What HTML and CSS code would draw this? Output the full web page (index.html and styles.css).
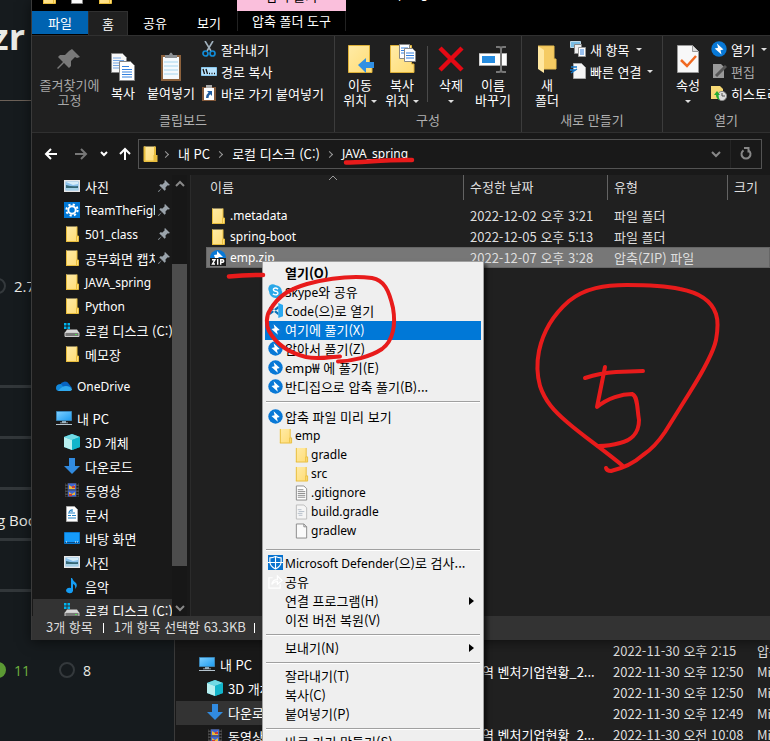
FILE: index.html
```html
<!DOCTYPE html>
<html lang="ko">
<head>
<meta charset="utf-8">
<title>JAVA_spring</title>
<link rel="stylesheet" href="styles.css">
</head>
<body>
<svg class="defs" aria-hidden="true">
  <defs>
    <linearGradient id="gold" x1="0" y1="0" x2="1" y2="1"><stop offset="0" stop-color="#ffeba6"/><stop offset="1" stop-color="#ffdc75"/></linearGradient>
    <linearGradient id="screen" x1="0" y1="0" x2="1" y2="1"><stop offset="0" stop-color="#7fd0ff"/><stop offset="1" stop-color="#1c9bf0"/></linearGradient>
  </defs>
  <symbol id="folder" viewBox="0 0 16 16"><path d="M2 .5h11V10h1.5v5.500H2z" fill="url(#gold)"/><path d="M2.500 .5v15M2 15.500h12.500V10h-2v5M13 .5V10" fill="none" stroke="#e8bd3d"/></symbol>
  <symbol id="openfolder" viewBox="0 0 28 30"><path d="M5 2h16v13h2v10H5z" fill="#f5cb63"/><path d="M5 2l6 4v23l-6-4z" fill="#ffe7a0"/><path d="M11 25h12V15h-2V2H5" fill="none" stroke="#e8bd50"/></symbol>
  <symbol id="picture" viewBox="0 0 16 16"><path d="M.7 2.700h14.600v10.600H.7z" fill="#8bc2ec" stroke="#e8e8e8" stroke-width="1.400"/><path d="M2 7q6 2 12 1v4H2z" fill="#346776"/><path d="M2 10h12v2H2z" fill="#a3cfe5"/><path d="M2 4h12v2l-5 1z" fill="#d5edfa"/></symbol>
  <symbol id="gear" viewBox="0 0 16 16"><path d="M0 0h16v16H0z" fill="#0078d7"/><circle cx="8" cy="8" r="3.700" fill="none" stroke="#fff" stroke-width="2"/><circle cx="8" cy="8" r="5.600" fill="none" stroke="#fff" stroke-width="2" stroke-dasharray="2.200 2.198"/></symbol>
  <symbol id="drive" viewBox="0 0 16 16"><path d="M0 1h2.500v2.500H0zM3.500 1H6v2.500H3.500zM0 4.500h2.500V7H0zM3.500 4.500H6V7H3.500z" fill="#00b5f1"/><path d="M3 7.500h10l2 3H1z" fill="#d7d7d7"/><path d="M1 10.500h14v4H1z" fill="#777" stroke="#ccc"/><path d="M11 12h2v1h-2z" fill="#4de04d"/></symbol>
  <symbol id="cloud" viewBox="0 0 16 16"><path d="M4 7a5 5 0 0 1 9-1l3 4-9 2z" fill="#0763c0"/><path d="M0 10q0-4 5-4l6 7H3q-3 0-3-3z" fill="#1389dc"/><path d="M2 13q4-5 8-5t6 3q0 2-3 2z" fill="#30a9ee"/></symbol>
  <symbol id="pc" viewBox="0 0 16 16"><path d="M.5 1.500h15v9H.5z" fill="url(#screen)" stroke="#3a84b5"/><path d="M6 11h4v2H6z" fill="#8aa4b3"/><path d="M0 14h16v1H0zM4 12.500h8v.8H4z" fill="#b5c4ce"/></symbol>
  <symbol id="cube" viewBox="0 0 16 16"><path d="M8 0l8 3v10l-8 3-8-3V3z" fill="#18a9c4"/><path d="M8 0l8 3-8 3-8-3z" fill="#72dae5"/><path d="M0 3l8 3v10l-8-3z" fill="#b8eff0"/><path d="M8 6l8-3v10l-8 3z" fill="#12b5cb"/></symbol>
  <symbol id="down" viewBox="0 0 16 16"><path d="M5 0h6v8h5l-8 8-8-8h5z" fill="#318be0"/></symbol>
  <symbol id="film" viewBox="0 0 16 16"><path d="M1 1h14v14H1z" fill="#4b4b4b"/><path d="M2.500 1v14M13.500 1v14" stroke="#151515" stroke-width="2" stroke-dasharray="1.500 1.500"/><path d="M4 1.500h8v6H4zM4 8.500h8v6H4z" fill="#3f65d2"/><path d="M5 3l3 2 3-2v4H5zM5 10l3 2 3-2v3H5z" fill="#ebb73a"/><path d="M8 4h3v2H8zM5 12h3v2H5z" fill="#cb3d34"/></symbol>
  <symbol id="doc" viewBox="0 0 16 16"><path d="M2.500.5h8l3 3v12h-11z" fill="#fff" stroke="#aaa"/><path d="M4 7h7M4 9.500h3m1 0h4M4 12h8M7 4l-2 2m3-3v3" stroke="#2584c8" stroke-width="1.200"/></symbol>
  <symbol id="desktop" viewBox="0 0 16 16"><path d="M.5 2.500h15v11H.5z" fill="#169bfa" stroke="#0879d0"/><path d="M1 12h14v1H1z" fill="#064d8d"/><path d="M2 12h1M11 12h1M13 12h1" stroke="#fff"/></symbol>
  <symbol id="note" viewBox="0 0 16 16"><path d="M8 0q1 3 4 5 2 3-1 6 1-4-2-5v7a3.500 2.700 0 1 1-2-3V0z" fill="#149df5"/></symbol>
  <symbol id="pin" viewBox="0 0 12 12"><path d="M7 0l5 5-1.500.6-.8-.3L7.500 7.500l.2 2.300-1.200.9L4 8l-3.300 4L0 11.300 4 8 1.300 5.500l1-1.200 2.200.2L6.700 2.300 6.400 1z" fill="#9aa3ab"/></symbol>
  <symbol id="bandi" viewBox="0 0 16 16"><circle cx="8" cy="8" r="7.700" fill="#0878d6"/><path d="M6 2.500l6.500 6-3 .7 1 4.300-6.800-6 3.300-.8z" fill="#fff"/></symbol>
  <symbol id="zip" viewBox="0 0 16 16"><path d="M0 8a8 8 0 0 1 16 0z" fill="#0878d6"/><path d="M7 1l6 6H8l1 1H5L4 5l3-.5z" fill="#fff"/><path d="M0 8h16v8H0z" fill="#1d1d1d"/><path d="M2 9.700h3L2.500 14H5M7.700 9v5.700M10.700 14.700v-5H13q1.500 1.300 0 2.600h-2" fill="none" stroke="#fff" stroke-width="1.400"/></symbol>
  <symbol id="skype" viewBox="0 0 16 16"><circle cx="5" cy="5" r="4.700" fill="#2ba8e8"/><circle cx="11" cy="11" r="4.700" fill="#2ba8e8"/><circle cx="8" cy="8" r="6.800" fill="#2ba8e8"/><path d="M10.700 5.500Q8 3.500 6 5q-1 2 2 2.800 3.500.7 2.200 3Q8 12.500 5.200 10.500" fill="none" stroke="#fff" stroke-width="1.500"/></symbol>
  <symbol id="code" viewBox="0 0 16 16"><path d="M11 0l5 2v12l-5 2z" fill="#28a8f0"/><path d="M11 3L1 11l1.500 1.500L11 6zM11 13L1 5l1.500-1.500L11 10z" fill="#0873b9"/></symbol>
  <symbol id="textfile" viewBox="0 0 16 16"><path d="M2.500.5h8l3 3v12h-11z" fill="#fff" stroke="#888"/><path d="M4 4.500h6M4 6.500h8M4 8.500h8M4 10.500h8M4 12.500h8" stroke="#888"/></symbol>
  <symbol id="gradlefile" viewBox="0 0 16 16"><path d="M2.500.5h8l3 3v12h-11z" fill="#f5f5f5" stroke="#bbb"/><path d="M4 5.500h4M5 7.500h6M4 9.500h5M5 11.500h4" stroke="#b5bec9"/></symbol>
  <symbol id="blankfile" viewBox="0 0 16 16"><path d="M2.500.5h8l3 3v12h-11z" fill="#fafafa" stroke="#888"/><path d="M10.500.5v3h3" fill="none" stroke="#888"/></symbol>
  <symbol id="defender" viewBox="0 0 16 16"><path d="M0 0h16v16H0z" fill="#0873cf"/><path d="M8 1.500q3 1.500 6 1.500v4q0 5-6 8-6-3-6-8V3q3 0 6-1.500z" fill="#0873cf" stroke="#fff" stroke-width="1.200"/><path d="M8 1v14M0 8h16" stroke="#fff" stroke-width="1.200"/></symbol>
  <symbol id="share" viewBox="0 0 16 16"><path d="M5 4H1v11h12v-4M4 11q1-5 6-5V2l5 5-5 4V8Q6 8 4 11z" fill="none" stroke="#fff" stroke-width="1.300"/></symbol>
  <symbol id="copy" viewBox="0 0 28 30"><path d="M2.500 1.500h11l4 4v15h-15z" fill="#f8f8f8" stroke="#858585"/><path d="M4 6h8M4 8.500h11M4 11h11M4 13.500h11M4 16h11" stroke="#76a7e5"/><path d="M10.500 9.500h11l4 4v15h-15z" fill="#fff" stroke="#858585"/><path d="M13 14.500h7M13 17.500h10M13 20h10M13 22.500h10M13 25h10" stroke="#3481df"/></symbol>
</svg>

<div class="screen">
  <main class="site">
    <div class="brand">zr</div>
    <p class="version"><span class="radio"></span>2.7</p>
    <div class="rules"><i></i><i></i><i></i><b>g Boo</b><i></i><i></i></div>
    <p class="java"><span class="radio on"></span><em>11</em><span class="radio ring"></span>8</p>
  </main>

  <section class="window back">
    <nav class="tree" aria-label="다운로드 폴더">
      <a href="#" class="top"><svg><use href="#pc"/></svg>내 PC</a>
      <a href="#"><svg><use href="#cube"/></svg>3D 개체</a>
      <a href="#" class="selected"><svg><use href="#down"/></svg>다운로드</a>
      <a href="#"><svg><use href="#film"/></svg>동영상</a>
    </nav>
    <table class="files">
      <colgroup><col class="c-name"><col class="c-date"><col></colgroup>
      <tr><td></td><td>2022-11-30 오후 2:15</td><td>압축(ZIP) 파일</td></tr>
      <tr><td class="name">역 벤처기업현황_2...</td><td>2022-11-30 오후 12:50</td><td>Microsoft Excel</td></tr>
      <tr><td></td><td>2022-11-30 오후 12:50</td><td>Microsoft Excel</td></tr>
      <tr><td></td><td>2022-11-30 오후 12:49</td><td>Microsoft Excel</td></tr>
      <tr><td class="name">역 벤처기업현황_2...</td><td>2022-11-30 오전 10:08</td><td>Microsoft Excel</td></tr>
    </table>
  </section>

  <section class="window front">
    <header class="titlebar">
      <div class="quick"><svg><use href="#folder"/></svg><svg><use href="#blankfile"/></svg><svg><use href="#folder"/></svg></div>
      <div class="context">압축 풀기</div>
      <div class="title latin">JAVA_spring</div>
    </header>
    <div class="tabs">
      <button class="file">파일</button><button class="home">홈</button><button class="tab">공유</button><button class="tab">보기</button><button class="tools">압축 폴더 도구</button>
    </div>

    <div class="ribbon">
      <section class="group clip">
        <div class="controls">
          <button class="big w67 dim"><svg viewBox="0 0 28 30"><path d="M16 5l8 8-3 1-2-1-4 4v5l-2 2-5-5-6 6-1-1 6-6-5-5 2-2h5l4-4z" fill="#797979"/></svg>즐겨찾기에<br>고정</button>
          <button class="big w40"><svg><use href="#copy"/></svg>복사</button>
          <button class="big w56"><svg viewBox="0 0 28 30"><path d="M4 3h20v26H4z" fill="#8d623d"/><path d="M6 5h16v22H6z" fill="#f5fafe"/><path d="M7 10h14M7 14h14M7 18h14M7 22h14" stroke="#a6d5ee"/><path d="M8 6V3h4q2-5 4 0h4v3z" fill="#8c9094"/></svg>붙여넣기</button>
          <div class="small">
            <button><svg viewBox="0 0 16 16"><path d="M4 0l6 10M12 0L6 10" stroke="#a0b0bc" stroke-width="1.600"/><circle cx="4.500" cy="12.500" r="2.500" fill="none" stroke="#118bd6" stroke-width="1.700"/><circle cx="11.500" cy="12.500" r="2.500" fill="none" stroke="#118bd6" stroke-width="1.700"/></svg>잘라내기</button>
            <button><svg viewBox="0 0 16 16"><path d="M.5 4.500h15v8H.5z" fill="#b8e2fb" stroke="#89c8ed"/><path d="M2 6l1.500 5M5 6l1.500 5M8 10.500h1M10.500 10.500h1M13 10.500h1" stroke="#111" stroke-width="1.300"/></svg>경로 복사</button>
            <button><svg viewBox="0 0 16 16"><path d="M1 2h14v14H1z" fill="#855a3b"/><path d="M3 3h10v12H3z" fill="#fff"/><path d="M5 0h6v3H5z" fill="#aaa"/><path d="M6 6h5v5L9.300 9.300Q7.500 10.500 7.500 13H5q0-3.500 2.600-5.400z" fill="#235d9f"/></svg>바로 가기 붙여넣기</button>
          </div>
        </div>
        <h2>클립보드</h2>
      </section>
      <section class="group org">
        <div class="controls">
          <button class="big w42"><svg viewBox="0 0 28 30"><path d="M2.500 1.500h21V20H26v8.500H2.500z" fill="url(#gold)" stroke="#dfb23a"/><path d="M12 21l8-7v4h8v6h-8v5z" fill="#3090e4"/></svg>이동<br>위치 <i class="caret"></i></button>
          <button class="big w42"><svg viewBox="0 0 28 30"><path d="M2.500 1.500h21V20H26v8.500H2.500z" fill="url(#gold)" stroke="#dfb23a"/><path d="M11.500.5h10v14h-10z" fill="#fff" stroke="#888"/><path d="M13 4h7M13 6.500h7M13 9h7" stroke="#3481df"/><path d="M16.500 4.500h8l3 3v10h-11z" fill="#fff" stroke="#888"/><path d="M18 9h8M18 11.500h8M18 14h8" stroke="#3481df"/></svg>복사<br>위치 <i class="caret"></i></button>
          <span class="divider"></span>
          <button class="big w42"><svg viewBox="0 0 28 30"><path d="M3 4l22 22M25 4L3 26" stroke="#e50914" stroke-width="4.500"/></svg>삭제<br><i class="caret"></i></button>
          <button class="big w42"><svg viewBox="0 0 28 30"><path d="M0 9.500h28v12H0z" fill="#fff" stroke="#aaa"/><path d="M3 12h13v7H3z" fill="#268ce0"/><path d="M17 3h3q2 0 2 2 0-2 2-2h3M22 4v22M17 28h3q2 0 2-2 0 2 2 2h3" fill="none" stroke="#777" stroke-width="2"/></svg>이름<br>바꾸기</button>
        </div>
        <h2>구성</h2>
      </section>
      <section class="group create">
        <div class="controls">
          <button class="big w42"><svg><use href="#openfolder"/></svg>새<br>폴더</button>
          <div class="small">
            <button><svg viewBox="0 0 16 16"><path d="M.5.5h10v6H.5z" fill="#79bce2" stroke="#bdd8e7"/><path d="M4.500 3.500h7v9h-7z" fill="#eee" stroke="#888"/><path d="M8.500 6.500h7v9h-7z" fill="#fff" stroke="#999"/><path d="M10 9h4M10 11h4M10 13h4" stroke="#3481df"/></svg>새 항목<i class="caret"></i></button>
            <button><svg viewBox="0 0 16 16"><path d="M3.500.5h8l4 4v11h-12z" fill="#f5f5f5" stroke="#aaa"/><path d="M1 4h6M0 7h6M1 10l6-4" stroke="#1377c9" stroke-width="1.300"/></svg>빠른 연결<i class="caret"></i></button>
          </div>
        </div>
        <h2>새로 만들기</h2>
      </section>
      <section class="group open">
        <div class="controls">
          <button class="big w42"><svg viewBox="0 0 28 30"><path d="M3.500 1.500h15l6 6v21h-21z" fill="#f8f8f8" stroke="#999"/><path d="M18.500 1.500v6h6" fill="#ddd" stroke="#999"/><path d="M7 16l6 6 9-10" fill="none" stroke="#f16a22" stroke-width="2.500"/></svg>속성<br><i class="caret"></i></button>
          <div class="small">
            <button><svg><use href="#bandi"/></svg>열기<i class="caret"></i></button>
            <button class="dim"><svg viewBox="0 0 16 16"><path d="M2 1h8l3 3v11H2z" fill="#999"/><path d="M5 13L15 3" stroke="#555" stroke-width="3"/></svg>편집</button>
            <button><svg viewBox="0 0 16 16"><path d="M0 1h9l3 3v10H0z" fill="#f7d975"/><circle cx="11" cy="11" r="4.600" fill="#ddd" stroke="#888"/><path d="M11 8v3h3" fill="none" stroke="#555"/><path d="M3 10l3-4 3 4H7.500q0 3 1.500 5-4-1-4-5z" fill="#26ac33"/></svg>히스토리</button>
          </div>
        </div>
        <h2>열기</h2>
      </section>
    </div>

    <div class="location">
      <button class="arrow" aria-label="뒤로"><svg viewBox="0 0 14 14"><path d="M13 7H2m5-5L2 7l5 5"/></svg></button>
      <button class="arrow off" aria-label="앞으로"><svg viewBox="0 0 14 14"><path d="M1 7h11M7 2l5 5-5 5"/></svg></button>
      <button class="recent" aria-label="최근 위치"><svg viewBox="0 0 8 8"><path d="M1 2l3 3 3-3"/></svg></button>
      <button class="arrow" aria-label="위로"><svg viewBox="0 0 14 14"><path d="M7 13V2M2 7l5-5 5 5"/></svg></button>
      <div class="address">
        <svg class="ico"><use href="#folder"/></svg><i class="sep"></i>
        <a href="#">내 PC</a><i class="sep"></i><a href="#">로컬 디스크 (C:)</a><i class="sep"></i><a href="#" class="latin">JAVA_spring</a>
        <button class="expand" aria-label="이전 위치"><svg viewBox="0 0 10 10"><path d="M1 3l4 4 4-4"/></svg></button>
        <button class="refresh" aria-label="새로 고침"><svg viewBox="0 0 14 14"><path d="M4.500 3.300A4.500 4.500 0 1 0 9.500 3.300M5 1h4.500v4.500"/></svg></button>
      </div>
    </div>

    <div class="body">
      <nav class="tree" aria-label="탐색 창">
        <a href="#"><svg><use href="#picture"/></svg><span>사진</span><svg class="pin"><use href="#pin"/></svg></a>
        <a href="#" class="latin"><svg><use href="#gear"/></svg><span>TeamTheFighters</span><svg class="pin"><use href="#pin"/></svg></a>
        <a href="#" class="latin"><svg><use href="#folder"/></svg><span>501_class</span><svg class="pin"><use href="#pin"/></svg></a>
        <a href="#"><svg><use href="#folder"/></svg><span>공부화면 캡처</span><svg class="pin"><use href="#pin"/></svg></a>
        <a href="#" class="latin"><svg><use href="#folder"/></svg>JAVA_spring</a>
        <a href="#" class="latin"><svg><use href="#folder"/></svg>Python</a>
        <a href="#"><svg><use href="#drive"/></svg>로컬 디스크 (C:)</a>
        <a href="#"><svg><use href="#folder"/></svg>메모장</a>
        <a href="#" class="top latin"><svg><use href="#cloud"/></svg>OneDrive</a>
        <a href="#" class="top"><svg><use href="#pc"/></svg>내 PC</a>
        <a href="#"><svg><use href="#cube"/></svg>3D 개체</a>
        <a href="#"><svg><use href="#down"/></svg>다운로드</a>
        <a href="#"><svg><use href="#film"/></svg>동영상</a>
        <a href="#"><svg><use href="#doc"/></svg>문서</a>
        <a href="#"><svg><use href="#desktop"/></svg>바탕 화면</a>
        <a href="#"><svg><use href="#picture"/></svg>사진</a>
        <a href="#"><svg><use href="#note"/></svg>음악</a>
        <a href="#" class="selected"><svg><use href="#drive"/></svg>로컬 디스크 (C:)</a>
      </nav>
      <div class="scroll">
        <svg viewBox="0 0 10 10"><path d="M1 7l4-4 4 4"/></svg>
        <div class="track"><div class="thumb"></div></div>
        <svg viewBox="0 0 10 10"><path d="M1 3l4 4 4-4"/></svg>
      </div>
      <div class="list">
        <table class="files">
          <colgroup><col class="c-name"><col class="c-date"><col class="c-type"><col></colgroup>
          <thead><tr><th><span>이름</span><svg class="sort" viewBox="0 0 10 6"><path d="M1 5l4-4 4 4"/></svg></th><th><span>수정한 날짜</span></th><th><span>유형</span></th><th><span>크기</span></th></tr></thead>
          <tbody>
            <tr><td class="name latin"><svg><use href="#folder"/></svg>.metadata</td><td>2022-12-02 오후 3:21</td><td>파일 폴더</td><td></td></tr>
            <tr><td class="name latin"><svg><use href="#folder"/></svg>spring-boot</td><td>2022-12-05 오후 5:13</td><td>파일 폴더</td><td></td></tr>
            <tr class="chosen"><td class="name latin"><svg><use href="#zip"/></svg>emp.zip</td><td>2022-12-07 오후 3:28</td><td>압축(ZIP) 파일</td><td></td></tr>
          </tbody>
        </table>
      </div>
    </div>
    <footer class="status"><span>3개 항목</span><span>1개 항목 선택함 63.3KB</span><span></span></footer>
  </section>

  <div class="menu" role="menu">
    <button role="menuitem"><i></i><b>열기(O)</b></button>
    <button role="menuitem"><svg><use href="#skype"/></svg><span><span class="latin">Skype</span>와 공유</span></button>
    <button role="menuitem"><svg><use href="#code"/></svg><span><span class="latin">Code</span>(으)로 열기</span></button>
    <button role="menuitem" class="hover"><svg><use href="#bandi"/></svg>여기에 풀기(X)</button>
    <button role="menuitem"><svg><use href="#bandi"/></svg>알아서 풀기(Z)</button>
    <button role="menuitem"><svg><use href="#bandi"/></svg>emp₩ 에 풀기(E)</button>
    <button role="menuitem"><svg><use href="#bandi"/></svg>반디집으로 압축 풀기(B)...</button>
    <hr>
    <div class="preview">
      <button role="menuitem"><svg><use href="#bandi"/></svg>압축 파일 미리 보기</button>
      <button role="menuitem" class="in1 latin"><svg><use href="#folder"/></svg>emp</button>
      <button role="menuitem" class="in2 latin"><svg><use href="#folder"/></svg>gradle</button>
      <button role="menuitem" class="in2 latin"><svg><use href="#folder"/></svg>src</button>
      <button role="menuitem" class="in2 latin"><svg><use href="#textfile"/></svg>.gitignore</button>
      <button role="menuitem" class="in2 latin"><svg><use href="#gradlefile"/></svg>build.gradle</button>
      <button role="menuitem" class="in2 latin"><svg><use href="#blankfile"/></svg>gradlew</button>
    </div>
    <hr>
    <button role="menuitem"><svg><use href="#defender"/></svg><span><span class="latin">Microsoft Defender</span>(으)로 검사...</span></button>
    <button role="menuitem"><svg><use href="#share"/></svg>공유</button>
    <button role="menuitem" class="more"><i></i>연결 프로그램(H)</button>
    <button role="menuitem"><i></i>이전 버전 복원(V)</button>
    <hr>
    <button role="menuitem" class="more"><i></i>보내기(N)</button>
    <hr>
    <button role="menuitem"><i></i>잘라내기(T)</button>
    <button role="menuitem"><i></i>복사(C)</button>
    <button role="menuitem"><i></i>붙여넣기(P)</button>
    <hr>
    <button role="menuitem"><i></i>바로 가기 만들기(S)</button>
  </div>

  <svg class="ink" viewBox="0 0 770 741" aria-hidden="true">
    <path d="M346 162.500C365 162 390 159.500 412 160M229 276.500Q245 275 263 275" stroke-width="4.500"/>
    <path d="M340 356.500C325 358 315 359 306 357C290 353 276 344 269 331C266 325 266 316 270 310C279 295 290 289 307 284C330 278 355 276 372 278C384 280 389 290 393 308C396 325 393 341 382 349C370 357 352 361 338 361.500"/>
    <path d="M606 468Q607 471 611 471C624 468 634 463 643 455C652 449 659 441 665 432L690 392C700 376 713 354 716 340C718 329 718 320 716 314C711 299 696 292 680 289C661 285 643 285 627 285C605 285 585 288 569 301C554 314 543 332 539 351C537 361 537 375 540 386C545 401 554 411 567 422C583 436 600 447 623 466"/>
    <path d="M585 378Q600 373 616 372L643 371M605 367L597 407C608 398 622 394 632 394C638 396 637 409 639 420C639 435 629 441 620 443Q610 446 598 446"/>
  </svg>
</div>
</body>
</html>
```
FILE: styles.css
```css
* { box-sizing: border-box; }
body {
  margin: 0;
  background: #161b1e;
  color: #fff;
  font: 13px/19px "Noto Sans CJK KR", sans-serif;
}
button { margin: 0; padding: 0; border: 0; background: none; color: inherit; font: inherit; text-align: left; }
a { color: inherit; text-decoration: none; }
h2, p { margin: 0; font-weight: 400; }
svg { display: block; flex: none; width: 16px; height: 16px; }
.latin { font-family: "Noto Sans", "Noto Sans CJK KR", sans-serif; font-size: 12px; }
.defs { position: absolute; width: 0; height: 0; }
.screen { position: relative; height: 100vh; overflow: hidden; }

/* web page behind the windows */
.site { font-family: "Open Sans", sans-serif; color: #ebebe6; }
.brand { display: flex; justify-content: flex-end; width: 25px; height: 101px; padding-top: 16px; font-size: 36px; line-height: 42px; font-weight: 700; }
.site::before { content: ""; position: absolute; top: 100px; width: 32px; height: 1px; background: #6c6158; }
.version { display: flex; align-items: center; height: 20px; margin-top: 175px; font-size: 15px; }
.radio { flex: none; width: 16px; height: 16px; margin-left: -10px; margin-right: 8px; border: 2px solid #34393c; border-radius: 50%; }
.rules { display: grid; padding-top: 89px; width: 32px; overflow: hidden; white-space: nowrap; }
.rules i { height: 3px; margin-bottom: 48px; background: #32373a; }
.rules b { height: 20px; margin: -28px 0 7px -3px; font-size: 15px; font-weight: 400; line-height: 20px; }
.java { display: flex; align-items: center; height: 20px; margin-top: 20px; font-size: 14px; }
.java em { color: #6db33f; font-style: normal; }
.radio.on { border-color: #5c9a34; background: #5c9a34; }
.radio.ring { margin-left: 29px; }

/* explorer windows */
.window { position: absolute; right: 0; background: #202020; }
.back { top: 640px; left: 174px; display: flex; border-left: 1px solid #3a3a3a; bottom: 0; overflow: hidden; }
.back .tree { width: 270px; padding-top: 13px; }
.back .tree a.top { margin: 0 0 0 1px; padding-left: 23px; }
.back .files { flex: 1; margin-left: 30px; }
.back .c-name { width: 131px; }
.front { top: 0; left: 31px; border-left: 1px solid #3a3a3a; box-shadow: 0 2px 12px #0008; }

.titlebar { display: flex; align-items: flex-end; height: 11px; overflow: hidden; background: #000; }
.quick { display: flex; gap: 12px; width: 205px; padding: 0 0 7px 9px; }
.context { width: 109px; height: 30px; background: #fabfdc; color: #000; text-align: center; line-height: 30px; }
.title { margin-left: 16px; height: 22px; line-height: 10px; }
.tabs { display: flex; height: 24px; background: #000; }
.tabs button { text-align: center; line-height: 20px; }
.tabs .file { width: 56px; height: 23px; background: #0063b1; }
.tabs .home { width: 40px; background: #202020; border: 1px solid #303030; border-bottom: 0; }
.tabs .tab { width: 54px; }
.tabs .tools { width: 109px; margin-left: 1px; height: 20px; border: 1px solid #222; border-width: 0 1px; }

.ribbon { display: flex; height: 98px; overflow: hidden; border: 1px solid #303030; border-width: 1px 0; background: #202020; }
.group { flex: none; display: flex; flex-direction: column; padding: 2px 0; border-right: 1px solid #3c3c3c; line-height: 15px; }
.group h2 { font-size: 13px; line-height: 20px; text-align: center; color: #b0b0b0; }
.controls { display: flex; height: 73px; padding-left: 4px; }
.clip { width: 303px; }
.org { width: 187px; }
.create { width: 141px; }
.open { width: 126px; border-right: 0; }
.big { text-align: center; white-space: nowrap; padding-top: 5px; height: 70px; }
.big svg { width: 28px; height: 30px; margin: 0 auto 3px; }
.w67 { width: 67px; }
.w56 { width: 56px; }
.w42 { width: 42px; }
.w40 { width: 40px; }
.dim { color: #a8a8a8; }
.divider { width: 1px; height: 56px; margin: 8px 2px 0 4px; background: #4a4a4a; }
.small { display: flex; flex-direction: column; padding-left: 2px; }
.small button { display: flex; align-items: center; gap: 4px; height: 22px; white-space: nowrap; }
.caret { display: inline-block; border: 3px solid transparent; border-top-color: #ddd; border-bottom: 0; vertical-align: middle; }
.small .caret { margin-left: 2px; }

.location { display: flex; align-items: center; height: 42px; padding-right: 8px; background: #191919; }
.location svg { fill: none; stroke: #fff; stroke-width: 2; }
.arrow { width: 30px; }
.arrow svg { width: 14px; height: 14px; margin-left: 12px; }
.arrow.off svg { stroke: #777; }
.recent { width: 22px; }
.recent svg { width: 8px; height: 8px; margin-left: 8px; }
.recent + .arrow svg { margin-left: 4px; }
.recent + .arrow { width: 24px; }
.address { flex: 1; display: flex; align-items: center; height: 30px; padding-left: 3px; border: 1px solid #535353; }
.address a { padding-bottom: 2px; }
.address .ico { stroke: none; }
.sep { width: 5px; height: 5px; margin: 0 10px 0 5px; border: solid #999; border-width: 1px 1px 0 0; rotate: 45deg; }
.address a + .sep { margin: 0 10px 0 7px; }
.address button svg { width: 10px; height: 10px; stroke: #888; }
.address .expand { margin-left: auto; padding-right: 9px; }
.address .refresh { height: 28px; padding: 0 8px; border-left: 1px solid #252525; }
.address .refresh svg { width: 14px; height: 14px; }

.body { display: flex; height: 441px; overflow: hidden; background: #191919; }
.tree { width: 140px; overflow: hidden; background: #191919; }
.tree a { display: flex; align-items: center; gap: 5px; height: 24px; margin-left: 1px; padding: 0 0 2px 31px; white-space: nowrap; }
.tree a.top { margin-top: 8px; margin-bottom: 8px; padding-left: 23px; }
.tree a.top + a.top { margin-bottom: 0; }
.tree a.selected { background: #333; }
.tree span { flex: 0 0 70px; overflow: hidden; }
.tree .pin { width: 12px; height: 12px; margin-left: -2px; }
.scroll { display: flex; flex-direction: column; align-items: center; width: 15px; padding: 4px 0 3px; background: #171717; }
.scroll svg { width: 10px; height: 10px; fill: none; stroke: #888; stroke-width: 2; }
.track { flex: 1; width: 15px; display: flex; flex-direction: column; justify-content: flex-end; padding-bottom: 37px; }
.thumb { height: 80%; background: #4d4d4d; }
.list { flex: 1; margin-left: 3px; padding-left: 15px; border-left: 1px solid #2b2b2b; background: #202020; }
.files { width: 100%; table-layout: fixed; border-collapse: collapse; color: #dedede; }
.list .c-name { width: 257px; }
.c-date { width: 144px; }
.c-type { width: 120px; }
.files td { height: 21px; padding: 0 0 0 7px; line-height: 19px; white-space: nowrap; overflow: hidden; }
.files .name { color: #fff; }
.list .name { display: flex; align-items: center; gap: 4px; padding-left: 4px; }
.files th { position: relative; height: 30px; padding: 0; vertical-align: top; text-align: left; font-weight: 400; }
.files th span { display: block; height: 25px; padding-left: 6px; border-left: 1px solid #636363; line-height: 23px; }
.files th:first-child span { padding-left: 3px; border-color: transparent; }
.sort { position: absolute; top: 0; left: 122px; width: 10px; height: 6px; fill: none; stroke: #999; }
.chosen { background: #777; outline: 1px solid #666; outline-offset: -1px; }
.status { display: flex; height: 24px; padding-left: 14px; background: #333; color: #dedede; line-height: 22px; }
.status span + span { margin-left: 10px; padding-left: 11px; background: linear-gradient(#fff, #fff) 0 7px / 1px 10px no-repeat; }
.status span:last-child { margin-left: 8px; }

/* context menu */
.menu { position: absolute; top: 261px; left: 262px; width: 222px; padding: 2px; border: 1px solid #a0a0a0; background: #efefef; color: #000; box-shadow: 3px 3px 4px #0009; }
.menu button { position: relative; display: flex; align-items: center; gap: 3px; width: 216px; height: 19px; padding: 0 0 2px 3px; white-space: nowrap; }
.menu button > i { flex: none; width: 14px; height: 14px; }
.menu svg { width: 15px; height: 15px; margin-right: -1px; }
.menu .in1 { padding-left: 13px; }
.menu .in2 { padding-left: 29px; }
.menu .in2 svg, .menu .in1 svg { height: 16px; }
.menu .hover { background: #0078d7; color: #fff; }
.menu hr { height: 2px; margin: 4px 1px 3px; border: 0; border-top: 1px solid #a0a0a0; background: #fff; }
.preview { padding: 2px 0 4px; }
.more::after { content: ""; position: absolute; right: 7px; top: 5px; border: 4px solid transparent; border-left: 5px solid #000; border-right: 0; }

/* pen marks over the desktop */
.ink { position: absolute; top: 0; left: 0; width: 770px; height: 741px; fill: none; stroke: #e81b1b; stroke-width: 4; stroke-linecap: round; stroke-linejoin: round; pointer-events: none; }
```
